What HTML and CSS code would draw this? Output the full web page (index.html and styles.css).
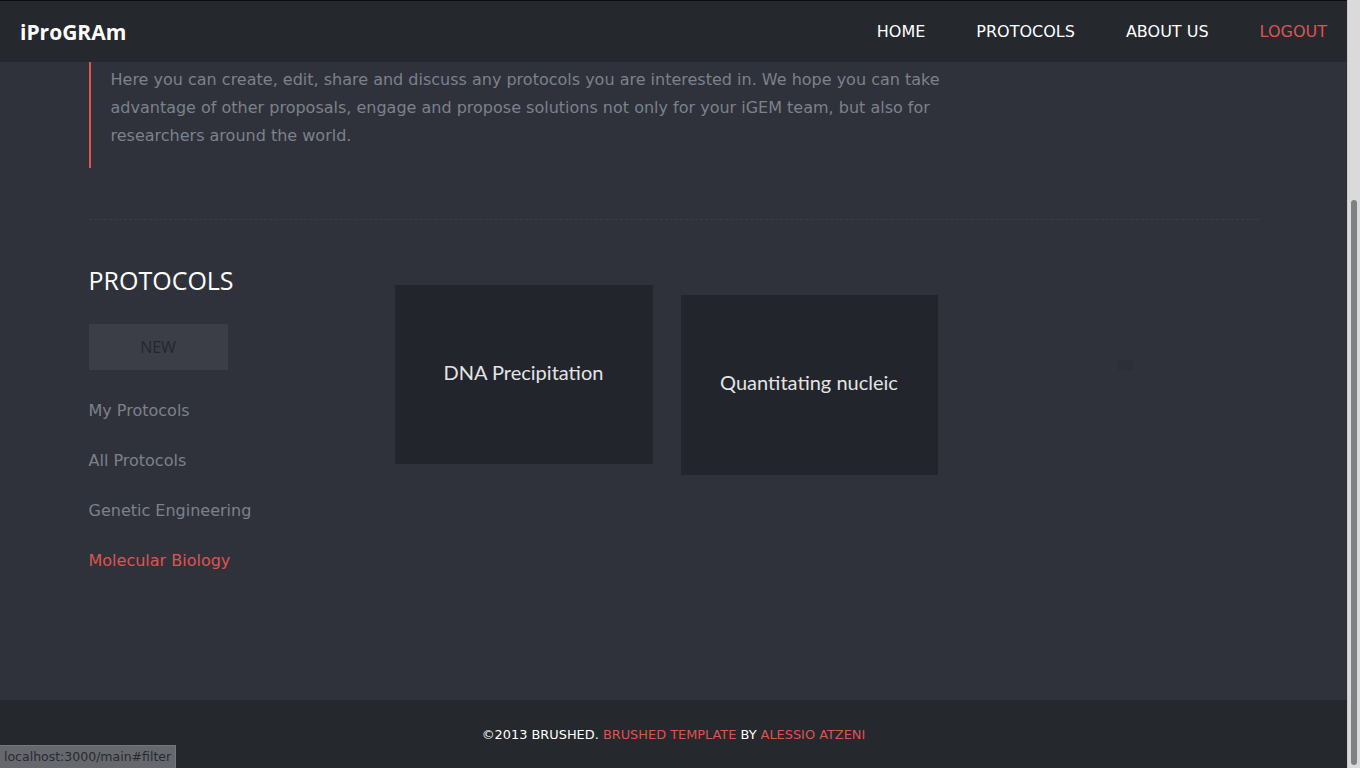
FILE: index.html
```html
<!DOCTYPE html>
<html>
<head>
<meta charset="utf-8">
<title>iProGRAm</title>
<link rel="stylesheet" href="styles.css">
</head>
<body>
<div class="viewport">
  <header class="topbar">
    <div class="logo">iProGRAm</div>
    <nav class="nav">
      <a class="nav-link" href="#">HOME</a>
      <a class="nav-link" href="#">PROTOCOLS</a>
      <a class="nav-link" href="#">ABOUT US</a>
      <a class="nav-link nav-logout" href="#">LOGOUT</a>
    </nav>
  </header>
  <main class="main">
    <div class="container">
      <blockquote class="intro">
        <p>Here you can create, edit, share and discuss any protocols you are interested in. We hope you can take advantage of other proposals, engage and propose solutions not only for your iGEM team, but also for researchers around the world.</p>
      </blockquote>
      <hr class="divider">
      <section class="protocols">
        <aside class="sidebar">
          <h2 class="side-title">PROTOCOLS</h2>
          <button class="btn-new">NEW</button>
          <ul class="filters">
            <li><a href="#">My Protocols</a></li>
            <li><a href="#">All Protocols</a></li>
            <li><a href="#">Genetic Engineering</a></li>
            <li><a class="active" href="#">Molecular Biology</a></li>
          </ul>
        </aside>
        <div class="cards">
          <div class="card">DNA Precipitation</div>
          <div class="card card-shift">Quantitating nucleic</div>
          <div class="card-ghost"></div>
        </div>
      </section>
    </div>
  </main>
  <footer class="footer">
    <p>©2013 BRUSHED. <a href="#">BRUSHED TEMPLATE</a> BY <a href="#">ALESSIO ATZENI</a></p>
  </footer>
  <div class="statusbar">localhost:3000/main#filter</div>
</div>
<div class="scrollbar"><div class="thumb"></div></div>
</body>
</html>
```
FILE: styles.css
```css
* { box-sizing: border-box; }
html, body { margin: 0; padding: 0; }
body {
  display: flex;
  width: 1360px;
  height: 768px;
  overflow: hidden;
  background: #2f323a;
  font-family: "DejaVu Sans", sans-serif;
}
a { text-decoration: none; }

.viewport {
  position: relative;
  width: 1347px;
  height: 768px;
  display: flex;
  flex-direction: column;
}

.topbar {
  height: 62px;
  flex: none;
  background: #25282d;
  border-top: 1px solid #0b0c0e;
  display: flex;
  align-items: center;
  justify-content: space-between;
  padding: 0 20px;
}
.logo {
  font-family: "Open Sans", sans-serif;
  font-weight: 700;
  font-size: 21px;
  color: #ffffff;
}
.nav { display: flex; gap: 51px; }
.nav-link {
  color: #ffffff;
  font-size: 16px;
}
.nav-logout { color: #de5450; }

.main { flex: 1; }
.container { width: 1170px; margin: 0 auto; }

.intro {
  margin: 0;
  border-left: 2px solid #de5450;
  padding: 4px 0 18px 20px;
  width: 880px;
}
.intro p {
  margin: 0;
  font-size: 16px;
  line-height: 28px;
  color: #7c818c;
}

.divider {
  margin: 51px 0 0;
  border: 0;
  border-top: 1px dashed #393c44;
}

.protocols {
  display: flex;
  padding-top: 45px;
}
.sidebar { width: 306px; flex: none; }
.side-title {
  margin: 0;
  font-family: "Open Sans", sans-serif;
  font-weight: 400;
  font-size: 25px;
  line-height: 30px;
  color: #ffffff;
}
.btn-new {
  margin-top: 29px;
  width: 139px;
  height: 46px;
  border: 0;
  background: #3b3e46;
  color: #24272d;
  font-family: "Open Sans", sans-serif;
  font-size: 16px;
  padding: 0;
  display: block;
}
.filters {
  list-style: none;
  margin: 31px 0 0;
  padding: 0;
  display: flex;
  flex-direction: column;
  gap: 30px;
}
.filters a {
  display: block;
  font-size: 16px;
  line-height: 20px;
  color: #7c818c;
}
.filters a.active { color: #de5450; }

.cards {
  display: flex;
  align-items: flex-start;
  gap: 28px;
  padding-top: 20px;
}
.card {
  width: 258px;
  height: 179px;
  padding-bottom: 6px;
  background: #22252c;
  display: flex;
  align-items: center;
  justify-content: center;
  font-family: Lato, sans-serif;
  font-size: 20px;
  color: #e4e4e4;
}
.card-shift { margin-top: 10px; width: 257px; height: 180px; }
.card-ghost {
  width: 16px;
  height: 10px;
  margin: 75px 0 0 151px;
  background: #2c2f36;
}

.footer {
  height: 68px;
  flex: none;
  background: #25282d;
  display: flex;
  align-items: center;
  justify-content: center;
}
.footer p {
  margin: 0;
  font-size: 12.9px;
  color: #ffffff;
}
.footer a { color: #de5450; }

.statusbar {
  position: absolute;
  left: 0;
  bottom: 0;
  height: 23px;
  padding: 0 4px;
  background: #66686d;
  border-top: 1px solid #76787c;
  border-right: 1px solid #76787c;
  color: #262a35;
  font-size: 12.5px;
  line-height: 22px;
}

.scrollbar {
  width: 13px;
  height: 768px;
  flex: none;
  background: #dadada;
  border-left: 1px solid #c9c9c9;
  padding: 200px 0 3px 3px;
}
.thumb {
  width: 6px;
  height: 100%;
  background: #7e8183;
  border-radius: 3px;
}
```
